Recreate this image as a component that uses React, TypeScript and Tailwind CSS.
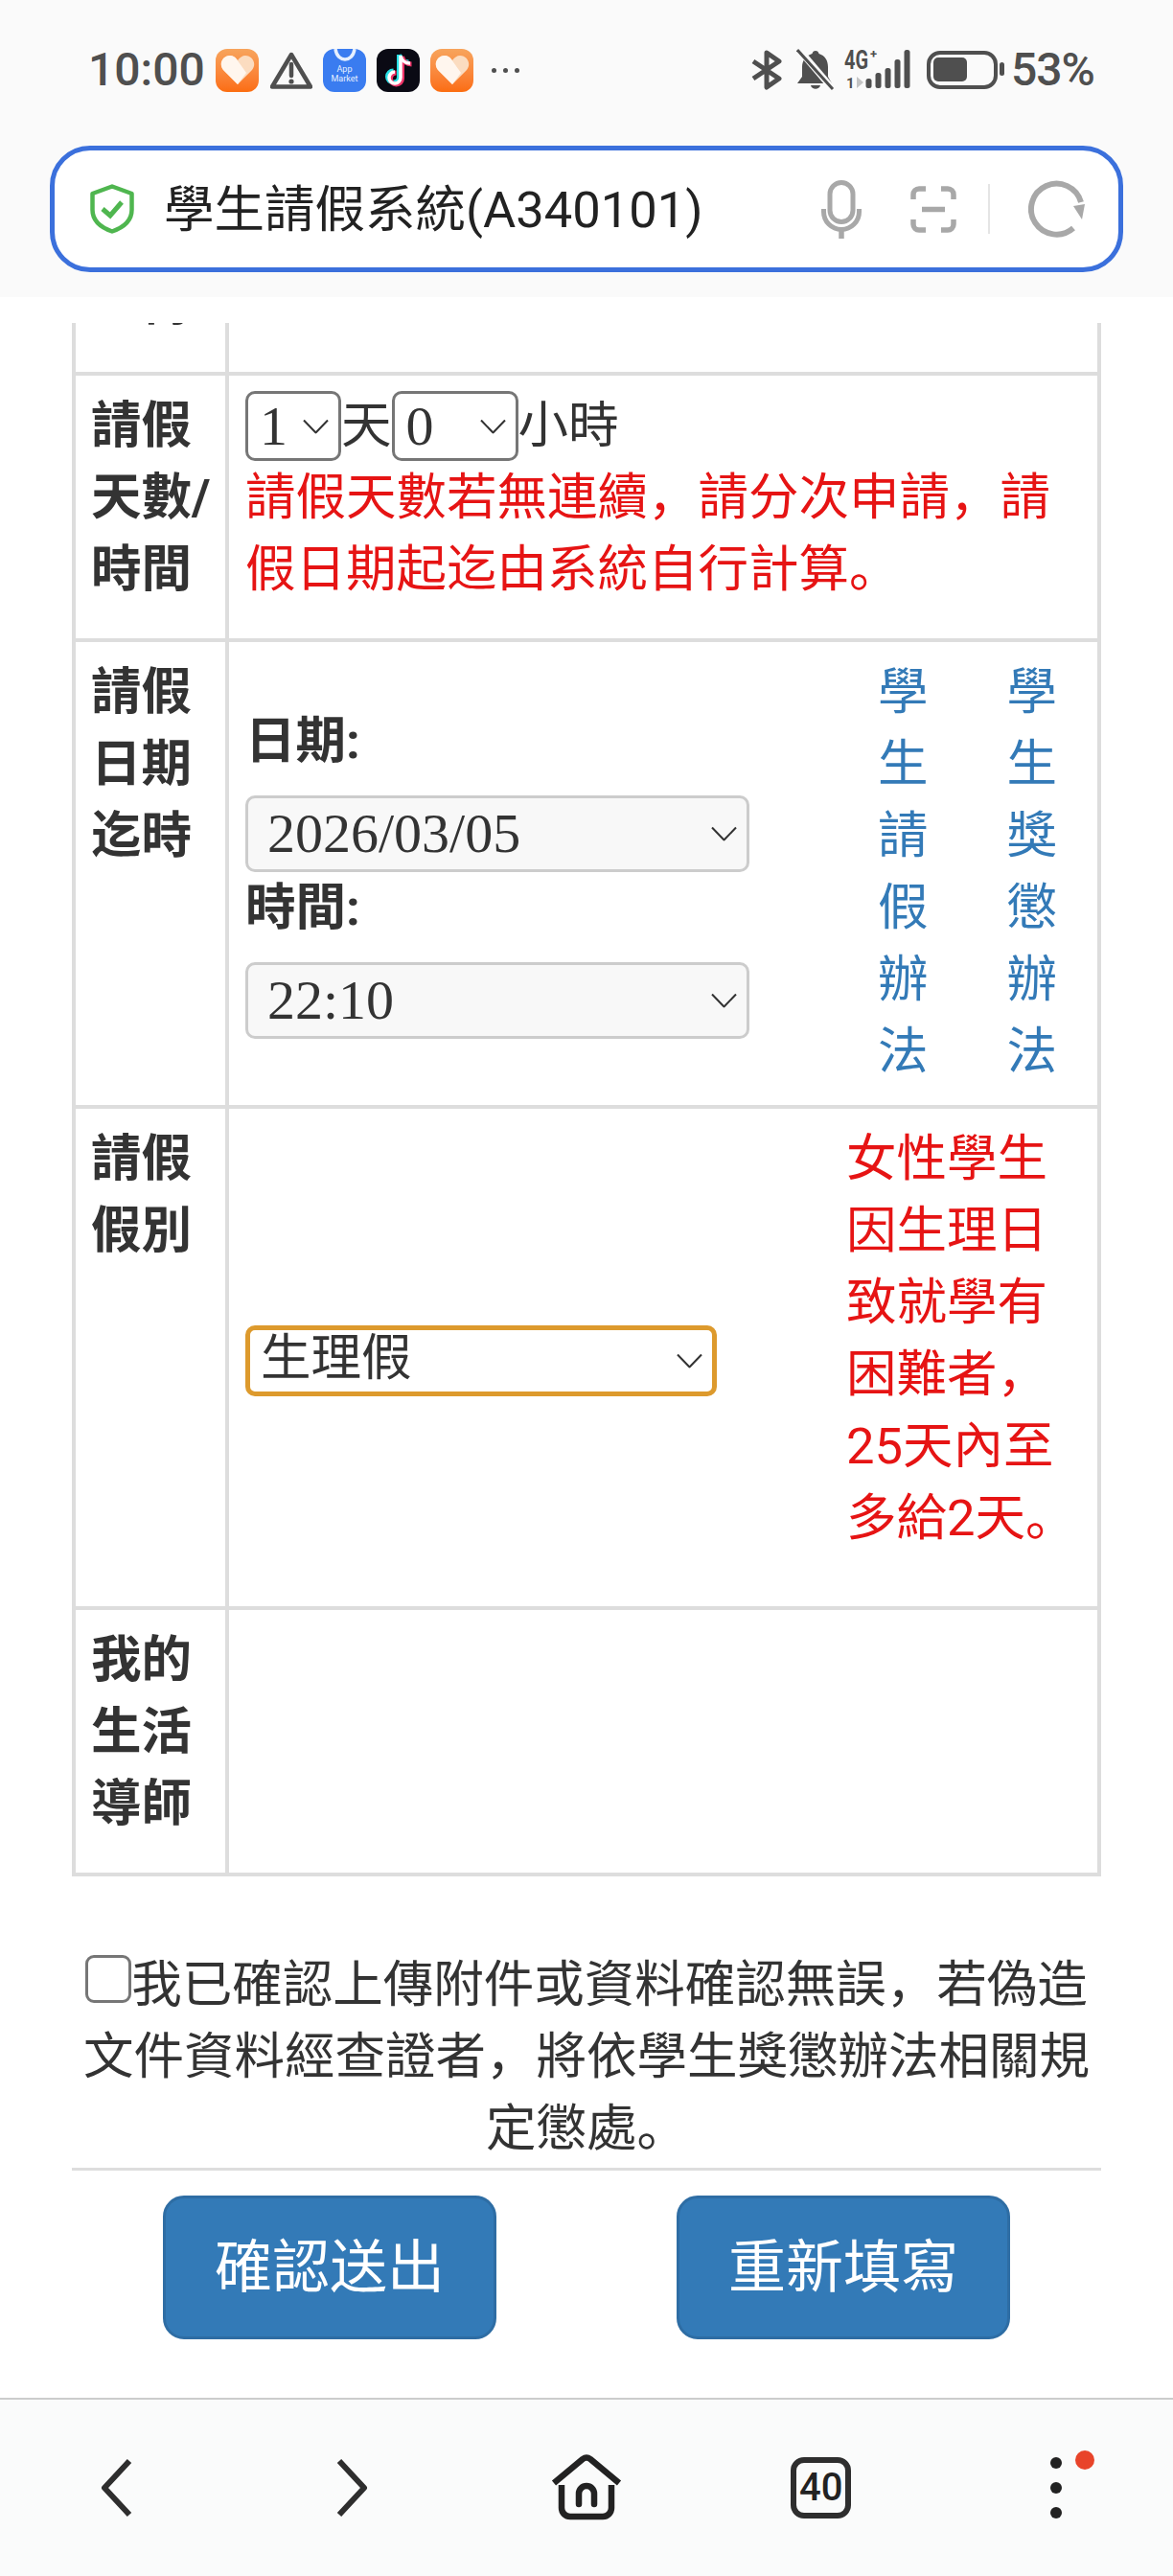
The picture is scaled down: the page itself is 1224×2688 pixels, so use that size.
function Heart() {
  return (
    <div className="flex h-[45px] w-[45px] items-center justify-center rounded-[12px] bg-gradient-to-b from-[#f7a45c] to-[#fb6d0f]">
      <svg width="36" height="32" viewBox="0 0 36 32">
        <path d="M18 31 L3 16 C-2 10 2 1 10 1 C13 1 16 3 18 6 C20 3 23 1 26 1 C34 1 38 10 33 16 Z" fill="#fbdcc0" />
        <path d="M18 31 L3 16 C-2 10 2 1 10 1 C13 1 15 2 17 5 L27 19 Z" fill="#fff6ee" />
      </svg>
    </div>
  );
}

function AppMarket() {
  return (
    <div className="flex h-[45px] w-[45px] flex-col items-center overflow-hidden rounded-[12px] bg-[#3a7cf0]">
      <svg width="24" height="14" viewBox="0 0 24 14" className="shrink-0">
        <path d="M2 0 C3 8 8 11 12 11 C16 11 21 8 22 0" fill="none" stroke="#e6f0ff" strokeWidth="3.5" />
      </svg>
      <span className="mt-[2px] text-center font-['Roboto',sans-serif] text-[9px] leading-[10px] text-[#e6f0ff]">
        App
        <br />
        Market
      </span>
    </div>
  );
}

function TikTok() {
  const note = "M20 4 V27 A6 6 0 1 1 14 21 M20 4 C21 9 25 12 30 12";
  return (
    <div className="flex h-[45px] w-[45px] items-center justify-center rounded-[12px] bg-[#0a0a14]">
      <svg width="36" height="38" viewBox="0 0 36 38" fill="none" strokeWidth="5">
        <path d={note} stroke="#28e0e6" transform="translate(-1.5 -1)" />
        <path d={note} stroke="#f0356a" transform="translate(1.5 1)" />
        <path d={note} stroke="#ffffff" strokeWidth="3.5" />
      </svg>
    </div>
  );
}

function Warning() {
  return (
    <svg width="44" height="39" viewBox="0 0 44 39" className="shrink-0">
      <path d="M22 3 L42 36.5 H2 Z" fill="none" stroke="#4f4f4f" strokeWidth="4.5" strokeLinejoin="round" />
      <path d="M22 13 V25" stroke="#4f4f4f" strokeWidth="4.5" strokeLinecap="round" />
      <circle cx="22" cy="31" r="2.6" fill="#4f4f4f" />
    </svg>
  );
}

function StatusBar() {
  return (
    <div className="flex h-[50px] items-center pl-[92px] text-[#4f4f4f]">
      <span className="w-[133px] font-['Roboto',sans-serif] text-[48px] font-medium leading-none">10:00</span>
      <Heart />
      <div className="ml-[12px] w-[55px]">
        <Warning />
      </div>
      <AppMarket />
      <div className="ml-[11px]">
        <TikTok />
      </div>
      <div className="ml-[11px]">
        <Heart />
      </div>
      <div className="ml-[19px] flex w-[29px] justify-between">
        <span className="h-[5px] w-[5px] rounded-full bg-[#4f4f4f]" />
        <span className="h-[5px] w-[5px] rounded-full bg-[#4f4f4f]" />
        <span className="h-[5px] w-[5px] rounded-full bg-[#4f4f4f]" />
      </div>
      <svg width="32" height="42" viewBox="0 0 32 42" fill="none" stroke="#4f4f4f" strokeWidth="5" className="ml-[242px]">
        <path d="M2 12 L29 30 L16 39 V3 L29 12 L2 30" strokeLinejoin="round" />
      </svg>
      <svg width="40" height="44" viewBox="0 0 40 44" className="ml-[15px]">
        <path d="M20 2 C22 2 23 3 23.5 5 C30 7 33 12 33 19 V29 L37 36 H1 L6 29 V19 C6 12 10 7 16.5 5 C17 3 18 2 20 2 Z M15 38 H25 C24 43 16 43 15 38 Z" fill="#4f4f4f" />
        <path d="M3 1 L38 42" stroke="#fafafa" strokeWidth="7" />
        <path d="M1 1 L38 42" stroke="#4f4f4f" strokeWidth="3" />
      </svg>
      <svg width="70" height="42" viewBox="0 0 70 42" className="ml-[10px] overflow-visible">
        <text x="0" y="20" fontFamily="Roboto, sans-serif" fontWeight="700" fontSize="27" textLength="25" lengthAdjust="spacingAndGlyphs" fill="#4f4f4f">4G</text>
        <text x="27" y="9" fontFamily="Roboto, sans-serif" fontWeight="700" fontSize="13" fill="#4f4f4f">+</text>
        <text x="2" y="40" fontFamily="Roboto, sans-serif" fontWeight="700" fontSize="15" fill="#4f4f4f">1</text>
        <path d="M13 28 L20 34 L13 40 Z" fill="#c4c4c4" />
        <rect x="22.5" y="30" width="6" height="10" rx="2.5" fill="#4f4f4f" />
        <rect x="32.5" y="24" width="6" height="16" rx="2.5" fill="#4f4f4f" />
        <rect x="42.5" y="19" width="6" height="21" rx="2.5" fill="#4f4f4f" />
        <rect x="52.5" y="10" width="6" height="30" rx="2.5" fill="#4f4f4f" />
        <rect x="62.5" y="0" width="6" height="40" rx="2.5" fill="#4f4f4f" />
      </svg>
      <svg width="82" height="40" viewBox="0 0 82 40" className="ml-[16px]">
        <rect x="2" y="2" width="70" height="36" rx="12" fill="none" stroke="#4f4f4f" strokeWidth="4" />
        <rect x="7" y="7" width="35" height="25" rx="5" fill="#4f4f4f" />
        <rect x="76" y="12" width="5" height="14" rx="2.5" fill="#4f4f4f" />
      </svg>
      <span className="ml-[6px] font-['Roboto',sans-serif] text-[48px] font-medium leading-none tracking-[-1px]">53%</span>
    </div>
  );
}

function AddressBar() {
  return (
    <div className="mx-[52px] mt-[54px] flex h-[132px] items-center rounded-[42px] border-[5px] border-[#3b70dc] bg-white pl-[37px] pr-[34px]">
      <svg width="46" height="52" viewBox="0 0 46 52" fill="none" stroke="#4fb64f" strokeWidth="4.5" className="shrink-0">
        <path d="M23 2.5 L43.5 10 V27 C43.5 39 33 46 23 49.5 C13 46 2.5 39 2.5 27 V10 Z" strokeLinejoin="round" />
        <path d="M13 26 L21 33 L33 19" strokeWidth="5" />
      </svg>
      <span className="ml-[31px] pt-[2px] font-['Roboto','Noto_Sans_CJK_SC',sans-serif] text-[52.5px] leading-none text-[#222222]">
        學生請假系統(A340101)
      </span>
      <svg width="42" height="61" viewBox="0 0 42 61" fill="none" stroke="#a8a8a8" strokeWidth="5" className="ml-auto shrink-0">
        <rect x="9" y="2.5" width="24" height="41" rx="12" />
        <path d="M2.5 30 V33 A18.5 18.5 0 0 0 39.5 33 V30" />
        <path d="M21 52 V61" strokeWidth="5.5" />
      </svg>
      <svg width="48" height="49" viewBox="0 0 48 49" fill="none" stroke="#a8a8a8" strokeWidth="5.5" className="ml-[51px] shrink-0">
        <path d="M16 3 H9 A6 6 0 0 0 3 9 V14 M32 3 H39 A6 6 0 0 1 45 9 V14 M3 35 V40 A6 6 0 0 0 9 46 H16 M45 35 V40 A6 6 0 0 1 39 46 H32 M12 24.5 H36" />
      </svg>
      <div className="ml-[33px] h-[52px] w-[2px] bg-[#e5e5e5]" />
      <svg width="60" height="60" viewBox="0 0 60 60" fill="none" className="ml-[40px] shrink-0">
        <path d="M47 50 A26.5 26.5 0 1 1 55 23" stroke="#a8a8a8" strokeWidth="6" />
        <path d="M47 27 L59 25 L56 41 Z" fill="#a8a8a8" />
      </svg>
    </div>
  );
}

function SelectBox({ value, className }: { value: string; className: string }) {
  return (
    <button type="button" className={`relative flex shrink-0 items-center text-left leading-none text-[#333333] ${className}`}>
      {value}
      <svg width="27" height="15" viewBox="0 0 27 15" fill="none" stroke="#333333" strokeWidth="2" className="absolute right-[10px] top-1/2 -translate-y-1/2">
        <path d="M1 1 L13.5 14 L26 1" />
      </svg>
    </button>
  );
}

const smallSelect = "rounded-[10px] border-[3px] border-[#767676] bg-white pl-[12px] font-['Liberation_Serif',serif] text-[58px]";
const dateSelect = "h-[80px] w-[526px] rounded-[10px] border-[3px] border-[#cccccc] bg-[#f8f8f8] pl-[20px] font-['Liberation_Serif',serif] text-[58px]";

function Label({ children }: { children: React.ReactNode }) {
  return <label className="mb-[19px] block font-bold">{children}</label>;
}

function Row({ label, children }: { label: string; children?: React.ReactNode }) {
  return (
    <tr>
      <th className="border-[4px] border-[#dddddd] pb-[15px] pl-[16px] pr-[6px] pt-[15px] text-left align-top">
        <Label>{label}</Label>
      </th>
      <td className="border-[4px] border-[#dddddd] pb-[15px] pl-[17px] pr-[15px] pt-[15px] align-top">{children}</td>
    </tr>
  );
}

export default function App() {
  return (
    <div className="flex h-[2688px] w-[1224px] flex-col overflow-hidden bg-white font-['Roboto','Noto_Sans_CJK_SC',sans-serif] text-[52.5px] leading-[75px] text-[#333333]">
      <header className="h-[310px] shrink-0 bg-[#fafafa] pt-[48px]">
        <StatusBar />
        <AddressBar />
      </header>

      <div className="mt-[27px] min-h-0 flex-1 overflow-hidden px-[75px]">
        <table className="-mt-[79px] w-[1074px] table-fixed border-collapse">
          <colgroup>
            <col className="w-[160px]" />
            <col />
          </colgroup>
          <tbody>
            <tr>
              <th className="border-[4px] border-t-0 border-[#dddddd] pl-[16px] pr-[6px] pt-[21px] text-left align-top font-bold">上傳</th>
              <td className="h-[132px] border-[4px] border-t-0 border-[#dddddd]" />
            </tr>
            <Row label="請假天數/時間">
              <div className="flex h-[75px] items-center">
                <SelectBox value="1" className={`h-[73px] w-[100px] ${smallSelect}`} />
                <span>天</span>
                <SelectBox value="0" className={`h-[73px] w-[132px] ${smallSelect}`} />
                <span>小時</span>
              </div>
              <p className="text-[#e61414]">請假天數若無連續，請分次申請，請假日期起迄由系統自行計算。</p>
            </Row>
            <Row label="請假日期迄時">
              <div className="mb-[3px] flex items-center">
                <div className="w-[526px]">
                  <Label>日期:</Label>
                  <SelectBox value="2026/03/05" className={dateSelect} />
                  <Label>時間:</Label>
                  <SelectBox value="22:10" className={dateSelect} />
                </div>
                <a className="ml-[134px] w-[52.5px] text-[#337ab7]">學生請假辦法</a>
                <a className="ml-[82px] w-[52.5px] text-[#337ab7]">學生獎懲辦法</a>
              </div>
            </Row>
            <Row label="請假假別">
              <div className="flex items-center">
                <SelectBox
                  value="生理假"
                  className="mt-[7px] h-[74px] w-[492px] rounded-[10px] border-[5px] border-[#dd9a2d] bg-white pb-[6px] pl-[11px] text-[52.5px]"
                />
                <p className="mb-[39px] ml-[135px] w-[245px] shrink-0 text-[#e61414]">
                  女性學生因生理日致就學有困難者，25天內至多給2天。
                </p>
              </div>
            </Row>
            <Row label="我的生活導師" />
          </tbody>
        </table>

        <p className="mt-[76px] text-center">
          <input type="checkbox" className="mt-[6px] h-[50px] w-[48px] appearance-none rounded-[9px] border-[3px] border-[#767676] bg-white align-top" />
          我已確認上傳附件或資料確認無誤，若偽造文件資料經查證者，將依學生獎懲辦法相關規定懲處。
        </p>
        <hr className="mt-[3px] border-t-[3px] border-[#dddddd]" />
        <div className="mt-[26px] flex justify-center gap-[188px]">
          <button className="h-[150px] w-[348px] rounded-[22px] border-[3px] border-[#2e6da4] bg-[#337ab7] text-[60px] text-white">確認送出</button>
          <button className="h-[150px] w-[348px] rounded-[22px] border-[3px] border-[#2e6da4] bg-[#337ab7] text-[60px] text-white">重新填寫</button>
        </div>
      </div>

      <nav className="grid h-[186px] shrink-0 grid-cols-5 items-center border-t-2 border-[#cccccc] bg-[#fafbfb]">
        <svg width="36" height="62" viewBox="0 0 36 62" fill="none" stroke="#2e2e2e" strokeWidth="6" strokeLinejoin="round" className="justify-self-center">
          <path d="M31 3 L5 31 L31 59" />
        </svg>
        <svg width="36" height="62" viewBox="0 0 36 62" fill="none" stroke="#2e2e2e" strokeWidth="6" strokeLinejoin="round" className="justify-self-center">
          <path d="M5 3 L31 31 L5 59" />
        </svg>
        <svg width="80" height="72" viewBox="0 0 80 72" fill="none" stroke="#222222" strokeWidth="6.5" strokeLinejoin="round" className="justify-self-center">
          <path d="M6 31 L36 6 Q40 3 44 6 L74 31" />
          <path d="M14 33 V57 A9 9 0 0 0 23 66 H57 A9 9 0 0 0 66 57 V33" />
          <path d="M32 53 V42 A8 8 0 0 1 48 42 V53" strokeLinecap="round" />
        </svg>
        <div className="flex h-[64px] w-[63px] items-center justify-center justify-self-center rounded-[14px] border-[6px] border-[#2e2e2e] font-['Roboto',sans-serif] text-[40px] font-medium leading-none text-[#222222]">
          40
        </div>
        <svg width="12" height="64" viewBox="0 0 12 64" className="justify-self-center overflow-visible">
          <circle cx="6" cy="6" r="6" fill="#222222" />
          <circle cx="6" cy="32" r="6" fill="#222222" />
          <circle cx="6" cy="58" r="6" fill="#222222" />
          <circle cx="36" cy="3" r="10" fill="#e8442a" />
        </svg>
      </nav>
    </div>
  );
}
